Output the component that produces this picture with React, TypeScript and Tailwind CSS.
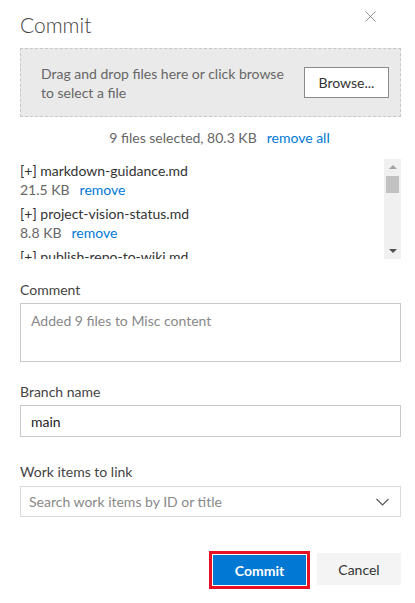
import { X } from 'lucide-react';

const files = [
  { name: 'markdown-guidance.md', size: '21.5 KB' },
  { name: 'project-vision-status.md', size: '8.8 KB' },
  { name: 'publish-repo-to-wiki.md', size: '4.2 KB' },
];

function FileList() {
  return (
    <div className="flex h-[100px]">
      <div className="flex-1 overflow-hidden pt-[2px]">
        {files.map((f) => (
          <div key={f.name} className="mb-[5px]">
            <div className="leading-[19px] text-[#333]">[+] {f.name}</div>
            <div className="leading-[19px]">
              <span className="text-[#666]">{f.size}</span>
              <span className="ml-[10px] text-[#0078d4]">remove</span>
            </div>
          </div>
        ))}
      </div>
      <div className="flex w-[17px] flex-col items-center bg-[#f0f0f0] pt-[6px]">
        <div className="h-0 w-0 border-x-[4px] border-b-[4px] border-x-transparent border-b-[#a3a3a3]" />
        <div className="mt-[7px] h-[17px] w-[13px] bg-[#c1c1c1]" />
        <div className="flex-1" />
        <div className="mb-[6px] h-0 w-0 border-x-[4px] border-t-[4px] border-x-transparent border-t-[#505050]" />
      </div>
    </div>
  );
}

export default function App() {
  return (
    <div
      className="h-[603px] w-[415px] bg-white text-[14px] text-[#333]"
      style={{ fontFamily: '"Segoe UI", Lato, "Noto Sans", sans-serif' }}
    >
      <div className="flex items-start justify-between pl-5 pr-[35px] pt-[10px]">
        <h1 className="text-[21px] font-light leading-[30px] text-[#444]">Commit</h1>
        <X className="mt-[-3px] h-[19px] w-[19px] text-[#777]" strokeWidth={1} />
      </div>

      <div className="ml-5 mr-[14px]">
        <div className="mt-[8px] flex h-[69px] items-center justify-between border border-dashed border-[#c8c8c8] bg-[#eaeaea] pl-5 pr-[11px]">
          <p className="w-[250px] leading-[19px] text-[#666]">
            Drag and drop files here or click browse to select a file
          </p>
          <button
            type="button"
            className="h-[31px] w-[85px] border border-[#8a8a8a] bg-white text-[#333]"
          >
            Browse...
          </button>
        </div>

        <div className="mt-[11px] pl-[18px] text-center leading-[19px]">
          <span className="text-[#666]">9 files selected, 80.3 KB</span>
          <span className="ml-[10px] text-[#0078d4]">remove all</span>
        </div>

        <div className="mt-[12px]">
          <FileList />
        </div>

        <label className="mt-[21px] block leading-[19px] text-[#444]">Comment</label>
        <div className="mt-[4px] h-[59px] border border-[#c8c8c8] px-[10px] pt-[7px] leading-[19px] text-[#888]">
          Added 9 files to Misc content
        </div>

        <label className="mt-[20px] block leading-[19px] text-[#444]">Branch name</label>
        <div className="mt-[4px] flex h-[32px] items-center border border-[#c8c8c8] px-[10px] text-[#222]">
          main
        </div>

        <label className="mt-[25px] block leading-[19px] text-[#444]">Work items to link</label>
        <div className="mt-[5px] flex h-[31px] items-center justify-between border border-[#dadada] pl-[8px] pr-[11px]">
          <span className="text-[#888]">Search work items by ID or title</span>
          <svg width="13" height="8" viewBox="0 0 13 8" fill="none" stroke="#555" strokeWidth="1.1">
            <polyline points="0.5,1 6.5,7 12.5,1" />
          </svg>
        </div>

        <div className="mt-[34px] flex justify-end gap-[7px]">
          <div className="border-[3px] border-[#e81123]">
            <button
              type="button"
              className="h-[32px] w-[95px] border border-white bg-[#0078d4] font-bold text-white"
            >
              Commit
            </button>
          </div>
          <button
            type="button"
            className="mt-[2px] h-[32px] w-[84px] bg-[#f4f4f4] text-[#333]"
          >
            Cancel
          </button>
        </div>
      </div>
    </div>
  );
}
